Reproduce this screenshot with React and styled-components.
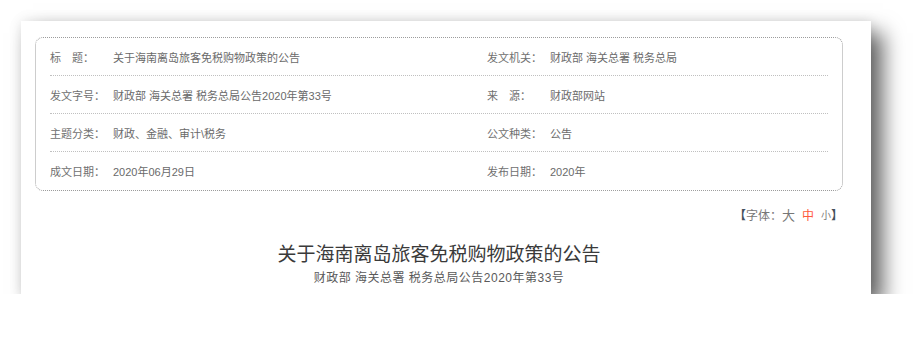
import React from 'react'
import styled, {createGlobalStyle} from 'styled-components'

const GlobalStyle = createGlobalStyle`
    body {
        margin: 0;
        background: #ffffff;
        font-family: "Liberation Sans", "Noto Sans CJK SC", sans-serif;
    }
`

const meta = [
    [['标\u2003题：', '关于海南离岛旅客免税购物政策的公告'], ['发文机关：', '财政部 海关总署 税务总局']],
    [['发文字号：', '财政部 海关总署 税务总局公告2020年第33号'], ['来\u2003源：', '财政部网站']],
    [['主题分类：', '财政、金融、审计\\税务'], ['公文种类：', '公告']],
    [['成文日期：', '2020年06月29日'], ['发布日期：', '2020年']],
]

const App = () => {
    return(
        <>
            <GlobalStyle/>
            <Page>
                <Card>
                    <InfoBox>
                        {meta.map((row, i) => (
                            <InfoRow key={i} last={i === meta.length - 1}>
                                {row.map(([label, value]) => (
                                    <Field key={label}>
                                        <Label>{label}</Label>
                                        <Value>{value}</Value>
                                    </Field>
                                ))}
                            </InfoRow>
                        ))}
                    </InfoBox>
                    <FontBar>
                        <Bracket>【</Bracket>字体：
                        <SizeOption size={13}>大</SizeOption>
                        <SizeOption size={12} active>中</SizeOption>
                        <SizeOption size={10} last>小</SizeOption>
                        <Bracket>】</Bracket>
                    </FontBar>
                    <Title>关于海南离岛旅客免税购物政策的公告</Title>
                    <SubTitle>财政部 海关总署 税务总局公告2020年第33号</SubTitle>
                </Card>
            </Page>
        </>
    )
}

export default App


const Page = styled.div`
    padding: 21px 0 0 21px;
`

const Card = styled.div`
    width: 850px;
    height: 273px;
    box-sizing: border-box;
    padding: 16px 28px 0 14px;
    background: #ffffff;
    box-shadow: 12px 12px 20px rgba(0, 0, 0, 0.6), 0 0 12px rgba(0, 0, 0, 0.1);
    overflow: hidden;
`

const InfoBox = styled.div`
    border: 1px dotted #9c9c9c;
    border-radius: 8px;
    padding: 0 14px;
`

const InfoRow = styled.div`
    display: grid;
    grid-template-columns: 437px 1fr;
    height: 38px;
    box-sizing: border-box;
    align-items: center;
    border-bottom: ${p => p.last ? 'none' : '1px dotted #c0c0c0'};
`

const Field = styled.div`
    display: flex;
    align-items: center;
    font-size: 11px;
    color: #707070;
`

const Label = styled.span`
    width: 63px;
    flex: none;
`

const Value = styled.span`
    color: #6a6a6a;
`

const FontBar = styled.div`
    display: flex;
    justify-content: flex-end;
    align-items: center;
    margin-top: 16px;
    font-size: 12px;
    color: #777777;
    height: 14px;
`

const Bracket = styled.span`
    color: #44505c;
    font-weight: 700;
`

const SizeOption = styled.span`
    font-size: ${p => p.size}px;
    color: ${p => p.active ? '#ff5a3c' : '#777777'};
    margin-right: ${p => p.last ? '0' : '7px'};
    &:first-of-type {
        margin-left: 2px;
    }
`

const Title = styled.h1`
    margin: 22px 0 0 0;
    text-align: center;
    font-size: 19px;
    font-weight: 400;
    color: #3a3a3a;
    line-height: 24px;
`

const SubTitle = styled.div`
    margin-top: 1px;
    text-align: center;
    font-size: 12px;
    color: #5a5a5a;
    letter-spacing: 0.5px;
`
